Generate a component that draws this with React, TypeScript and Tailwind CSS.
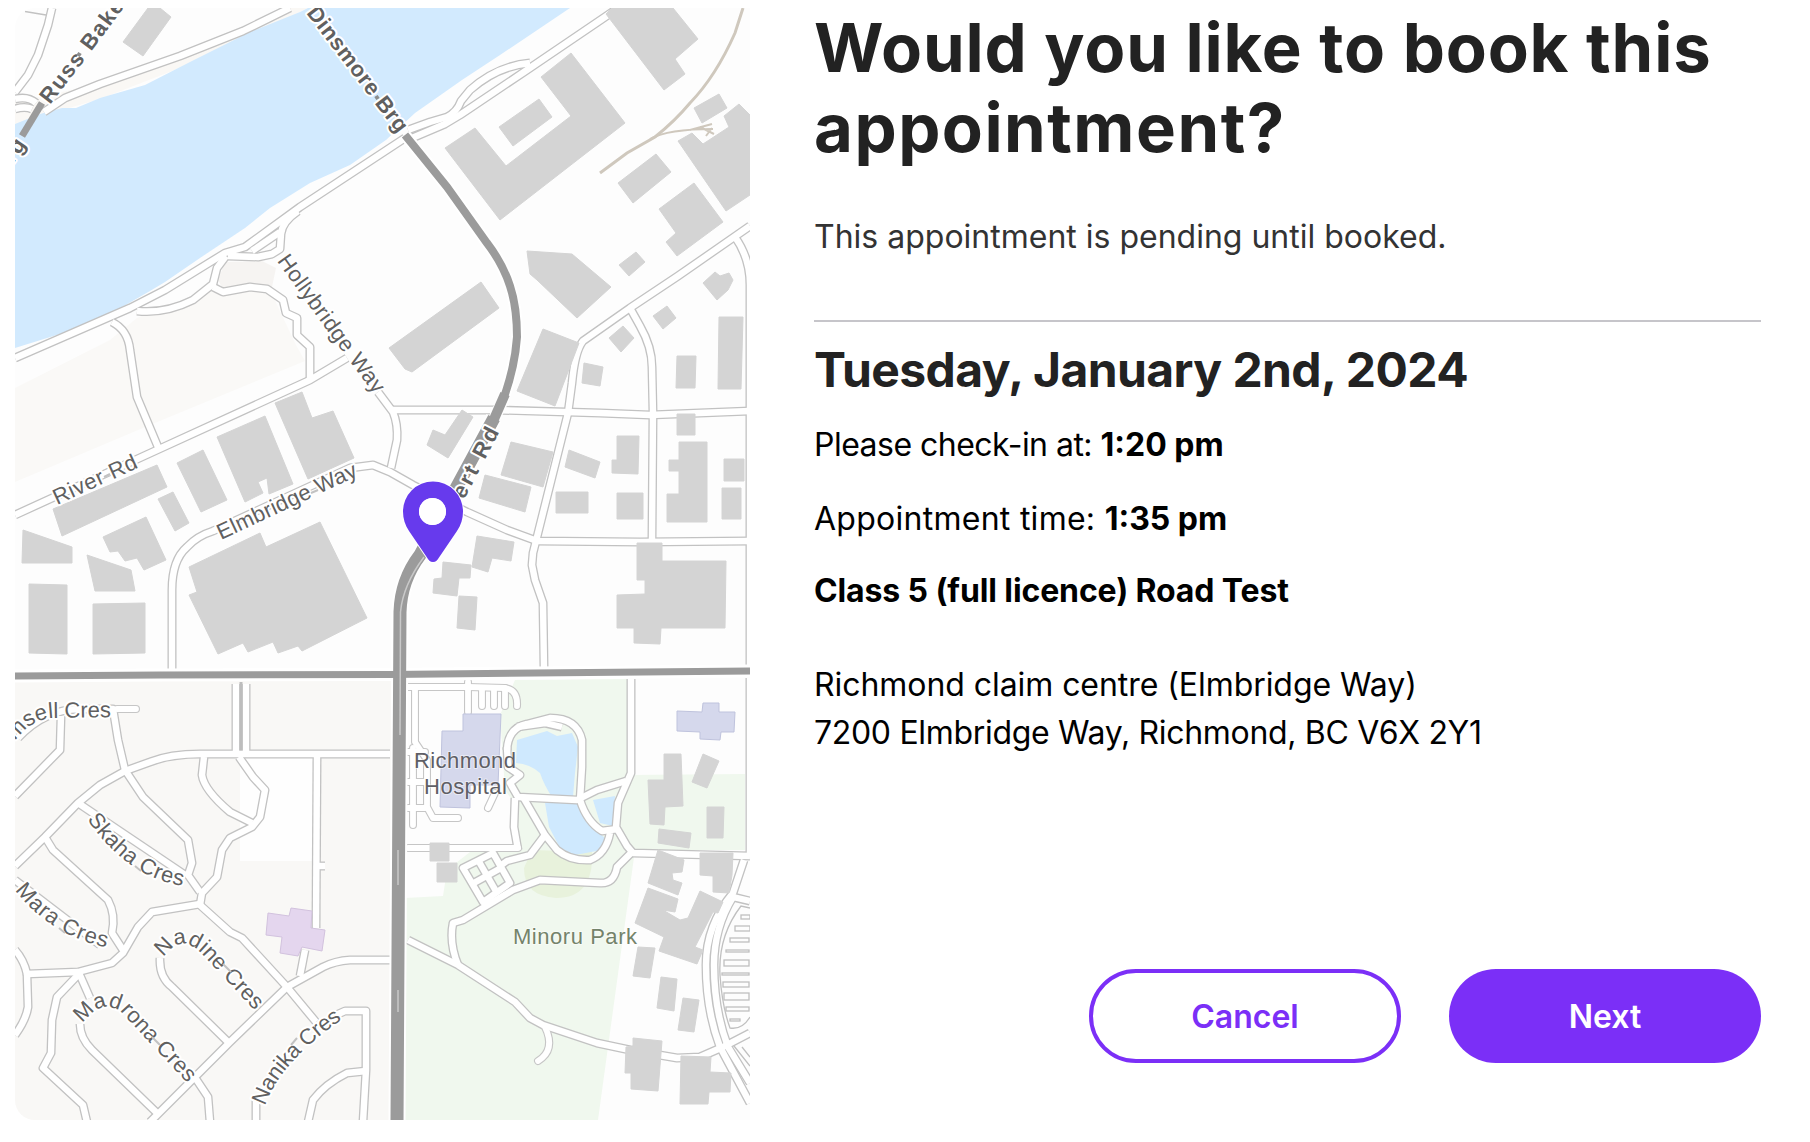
import React from "react";

const BUILDINGS: string[] = [
  "148,8 160,8 171,17 143,56 123,42",
  "606,14 612,8 673,8 698,39 675,59 685,74 664,90",
  "445,148 475,128 506,166 571,116 541,77 571,53 625,123 500,220",
  "499,127 539,99 552,117 513,146",
  "694,108 719,94 727,108 702,123",
  "678,141 692,133 703,144 729,127 724,116 739,104 750,115 750,195 726,211",
  "618,183 656,154 671,172 633,203",
  "659,209 694,183 723,222 677,256 666,242 676,233",
  "527,251 572,254 611,287 577,318 537,280 530,274",
  "619,265 636,252 645,262 629,276",
  "703,283 715,272 720,276 729,273 733,280 728,290 717,300",
  "389,348 481,282 499,308 412,372 405,369",
  "543,329 579,343 555,406 517,391",
  "653,316 667,306 676,318 663,329",
  "609,338 623,326 634,338 621,352",
  "584,363 603,367 600,386 582,383",
  "719,317 743,317 741,389 718,389",
  "677,356 696,356 695,388 676,388",
  "462,410 473,417 448,458 427,445 433,430 445,435",
  "511,442 553,452 543,487 501,475",
  "485,475 531,487 525,512 479,498",
  "569,450 600,462 595,478 565,467",
  "617,436 639,436 638,474 612,473 612,460 617,460",
  "556,492 588,492 588,513 556,513",
  "617,493 643,493 643,519 617,519",
  "677,414 695,414 695,435 677,435",
  "679,442 707,442 707,522 667,522 667,494 679,494 679,471 669,471 669,460 679,460",
  "724,459 744,459 744,481 724,481",
  "722,488 741,488 741,519 722,519",
  "477,536 514,542 511,561 492,558 488,572 472,567",
  "443,562 471,565 470,578 459,578 457,596 433,593 434,579 442,578",
  "459,596 477,597 475,630 457,628",
  "637,543 662,543 662,561 726,561 725,628 661,628 660,644 634,643 634,628 617,628 617,595 645,594 645,580 637,580",
  "53,509 157,465 167,487 62,536",
  "177,463 203,450 227,500 201,512",
  "158,499 173,492 189,523 175,531",
  "217,437 265,416 293,484 269,494 267,478 258,482 263,493 245,502",
  "275,403 302,392 312,418 333,411 354,458 308,479",
  "23,530 72,547 72,563 22,563",
  "103,537 146,517 166,560 144,570 137,558 125,561 118,551 110,552",
  "87,555 131,570 135,591 95,591",
  "29,584 67,585 67,654 29,653",
  "93,604 145,603 145,653 93,654",
  "189,567 260,533 266,547 320,522 367,618 302,651 298,646 278,653 273,642 248,652 243,643 218,654 189,595 197,592",
  "664,754 681,754 683,806 665,807 664,825 650,824 648,780 664,780",
  "703,754 719,761 707,788 692,782",
  "707,807 724,807 723,838 707,838",
  "659,829 691,833 689,848 658,843",
  "430,843 449,843 449,861 430,861",
  "437,863 457,863 457,882 437,882",
  "658,850 684,860 682,872 672,873 673,880 682,883 678,895 648,883",
  "648,888 678,899 675,912 663,910 680,920 688,918 700,891 723,902 718,913 713,912 695,947 703,950 697,964 659,951 664,937 635,923",
  "700,853 733,853 732,875 729,893 713,892 713,876 700,875",
  "638,947 655,948 650,978 633,976",
  "661,977 677,979 674,1011 657,1008",
  "683,998 699,1000 694,1032 678,1030",
  "633,1038 662,1041 658,1091 631,1089 631,1073 625,1073 626,1047 633,1046",
  "681,1056 711,1057 710,1072 731,1073 730,1092 709,1092 708,1104 680,1104",
];

const STREETS: string[] = [
  "M290,8 L243,31 L180,56 L100,84 L65,98 L44,112",
  "M52,8 L48,25 L38,55 L28,75 L15,92",
  "M15,99 Q28,96 36,103",
  "M15,109 Q25,106 32,109",
  "M618,8 L605,17 L524,72 L460,115 L445,124 L405,141",
  "M408,130 L430,122 L447,117 Q457,112 461,101 L470,90 Q497,66 530,63",
  "M405,138 L300,207 L245,247 L225,253 L165,290 L130,308 L15,358",
  "M298,211 Q282,222 281,234 L280,249 L272,254 L258,257 L228,256",
  "M280,232 L252,251",
  "M137,311 Q165,314 193,300 L213,284 L217,268 L226,256",
  "M213,287 L223,292 L250,287 L267,289 L283,300 L286,313 L297,318 L297,335 L310,347 L310,380",
  "M112,322 Q128,330 130,350 L137,397 L158,447",
  "M15,515 L157,450 L310,380 L347,358",
  "M378,392 L393,412 Q398,424 397,440 L391,468",
  "M393,410 L495,410 L600,413 L650,415 L750,411",
  "M172,670 L172,590 Q172,560 187,547 Q197,536 213,531 L350,468 L373,465 L390,472 L413,485 L467,512 L507,530 L537,541 L640,542 L750,541",
  "M750,226 L678,276 L630,308 L583,341 Q575,351 572,383 L568,413 L543,513 L533,553 L532,565 L535,580 L543,603 L544,668",
  "M630,308 L640,326 Q652,347 652,367 L653,413 L652,540",
  "M735,237 Q750,258 750,285 L750,668",
  "M750,678 L750,855",
  "M18,738 Q45,709 80,709 L113,709 L118,740 L125,770 L143,797 L188,840 L192,863 L188,875 L200,892",
  "M61,716 L60,750 L15,796",
  "M390,754 L200,754 Q170,754 150,762 L125,771 L100,785 L78,803 L45,837 L15,866",
  "M78,803 L185,875",
  "M45,837 L53,850 L108,900 Q116,915 112,933 L123,950",
  "M15,880 L100,945",
  "M204,757 L202,775 Q204,790 230,812 L252,823",
  "M239,757 L253,777 L265,790 L260,817 L252,827 L230,838 L222,850 L217,877 L202,893 L200,905",
  "M236,684 L236,754",
  "M246,684 L246,754",
  "M317,757 L316,928",
  "M316,866 L325,866",
  "M305,950 L300,976",
  "M390,960 L350,960 Q335,961 323,967 L287,987 L230,1042 L192,1080 L150,1122",
  "M200,905 L230,932 L242,938 L287,987 L316,1022",
  "M200,904 L152,912 L138,927 L123,953 L112,963 L78,972 L27,974 Q24,960 15,950",
  "M27,974 L28,1007 Q26,1020 15,1035",
  "M78,975 L57,997 L52,1020 L51,1053 L43,1068 L83,1105 L87,1122",
  "M79,973 L90,998",
  "M160,958 Q159,977 172,987 L228,1042",
  "M80,1024 Q80,1038 92,1050 L157,1113",
  "M196,1079 L208,1097 L210,1122",
  "M256,1122 L256,1100",
  "M336,1015 L345,1011 L366,1011 L366,1070 L363,1122",
  "M366,1071 L347,1073 Q325,1084 313,1100 L308,1122",
  "M631,679 L631,773 L618,803 L616,827 L627,846 L633,853 L750,856",
  "M507,747 L508,767 L520,775 L510,783 L518,797 L577,800 L597,790 L626,781",
  "M507,750 Q508,728 527,724 L550,718 Q577,718 582,740 L582,767 L580,800 Q587,822 602,831 L618,829",
  "M517,727 L545,723 L562,727",
  "M523,797 L545,835 L557,850 Q570,861 590,860 Q606,854 610,833",
  "M515,798 L514,827 L518,850",
  "M545,835 L530,855 L507,861 L500,866",
  "M631,853 L617,867 Q614,884 600,883 L540,880 L513,890 L463,920 L453,923 Q449,943 458,965",
  "M408,940 L458,965 L515,1002 L530,1018 L543,1025 L597,1043 L630,1050 L677,1058 L700,1057 L723,1047 L750,1033",
  "M744,860 L733,893 Q706,925 706,965 Q706,1010 720,1047 L750,1103",
  "M750,901 L733,897 Q714,928 714,965 Q714,1010 728,1047 L750,1083",
  "M463,868 L493,853 L510,883 L483,902 Z",
  "M472,884 L501,868",
  "M478,860 L497,893",
];

const LANES: string[] = [
  "M117,709 L136,709",
  "M545,1027 Q556,1050 538,1061",
  "M408,687 L468,687 L505,688 Q518,690 517,706",
  "M415,688 L415,742 L427,760 L427,807 L433,818 L458,818",
  "M413,748 L413,825",
  "M468,682 L468,712",
  "M482,688 L482,706",
  "M494,688 L494,706",
  "M505,688 L505,706",
  "M408,752 L425,752",
  "M408,782 L425,782",
  "M408,808 L425,808",
  "M408,848 L518,848",
  "M495,793 L488,808",
];

const PARKING: [number, number, number, number][] = [
  [741, 915, 9, 4],
  [735, 926, 15, 5],
  [730, 938, 19, 4],
  [726, 950, 23, 2],
  [724, 960, 25, 6],
  [722, 973, 27, 2],
  [723, 982, 26, 5],
  [724, 993, 25, 7],
  [726, 1007, 23, 4],
  [730, 1019, 10, 2],
];

type Label = {
  id: string;
  text: string;
  d: string;
  length: number;
  bold?: boolean;
};

const LABELS: Label[] = [
  { id: "russ", text: "Russ Baker", d: "M50,105 L90,53 L140,-14", length: 134, bold: true },
  { id: "brg", text: "Brg", d: "M3,179 L37,129", length: 42, bold: true },
  { id: "dins", text: "Dinsmore Brg", d: "M306,13 L406,144.500", length: 152, bold: true },
  { id: "gilbert", text: "ert Rd", d: "M464,500 L502,427", length: 77, bold: true },
  { id: "holly", text: "Hollybridge Way", d: "M277,261 Q320,322 386,410", length: 166 },
  { id: "river", text: "River Rd", d: "M57,505 L142,466", length: 90 },
  { id: "elm", text: "Elmbridge Way", d: "M221,540 L364,473", length: 152 },
  { id: "munsell", text: "msell Cres", d: "M15,741 Q32,718 55,718 L120,717", length: 104 },
  { id: "skaha", text: "Skaha Cres", d: "M87,819 Q130,882 192,887", length: 120 },
  { id: "mara", text: "Mara Cres", d: "M15,890 Q52,938 114,949", length: 110 },
  { id: "nadine", text: "Nadine Cres", d: "M163,957 L173,947 Q186,939 200,952 L260,1016", length: 124 },
  { id: "madrona", text: "Madrona Cres", d: "M82,1023 L94,1011 Q108,1002 122,1013 L192,1088", length: 143 },
  { id: "nanika", text: "Nanika Cres", d: "M265,1106 Q280,1062 344,1018", length: 118 },
];

function Pin() {
  return (
    <path
      d="M433,562 C430,562 428.500,560 427,557.500 L409,531 C405,525 403,519 403,511.500 A30,30 0 0 1 463,511.500 C463,519 461,525 457,531 L439,557.500 C437.500,560 436,562 433,562 Z M432.500,498 a13.500,13.500 0 1 0 0.010,0 Z"
      fill="#673aed"
      stroke="#ffffff"
      strokeWidth="2"
      paintOrder="stroke"
      fillRule="evenodd"
    />
  );
}

function MapView() {
  const main =
    "M405,135 L447,187 L487,243 Q503,264 510,286 Q517,307 517,337 Q515,367 503,400 L495,417";
  const wide = "M494,418 L420,555 Q401,580 400,612 L397,1122";
  return (
    <svg
      viewBox="15 8 735 1112"
      className="h-[1112px] w-[735px] shrink-0 rounded-l-[20px] bg-[#fdfdfd]"
      fontFamily="'Liberation Sans', sans-serif"
    >
      <polygon
        points="15,388 110,340 137,318 215,287 270,290 296,345 305,361 150,425 15,482"
        fill="#faf9f7"
      />
      <polygon points="225,262 262,261 276,268 272,287 223,289 218,280" fill="#f6f4f2" />
      <polygon points="15,102 100,84 243,31 290,8 308,8 190,64 100,99 62,110 15,124" fill="#faf8f5" />
      <polygon
        points="15,124 40,114 62,108 76,108 100,98 145,85 190,62 250,32 300,12 308,8 570,8 500,55 462,80 415,113 386,140 350,165 310,183 270,208 245,228 200,258 165,282 150,291 110,314 60,334 15,348"
        fill="#d2eafe"
      />
      <rect x="15" y="679" width="378" height="441" fill="#f9f8f6" />
      <rect x="240" y="758" width="73" height="103" fill="#fefefe" />
      <path
        d="M515,680 L627,679 L627,775 L745,774 L745,850 L635,850 L598,1120 L405,1120 L405,898 L443,896 L447,870 L470,852 L518,850 L512,800 L505,790 L500,715 Z"
        fill="#f0f8ee"
      />
      <path d="M532,850 L592,852 Q594,898 556,898 Q524,896 524,868 Z" fill="#e8f2dc" />
      <path
        d="M517,740 L547,731 L557,736 L572,733 L578,747 L575,773 L573,797 L552,797 Q544,785 540,773 Q530,764 516,763 Z M545,803 L578,803 L587,823 L605,838 L602,850 L575,855 L560,848 L549,827 Z M593,800 L615,796 L613,826 L600,823 Z"
        fill="#cfe9fe"
      />

      <g fill="none" stroke="#c2c2c2" strokeWidth="9" strokeLinejoin="round">
        {STREETS.map((d) => (
          <path key={d} d={d} />
        ))}
      </g>
      <g fill="none" stroke="#c6c6c6" strokeWidth="8" strokeLinejoin="round" strokeLinecap="round">
        {LANES.map((d) => (
          <path key={d} d={d} />
        ))}
      </g>
      <g fill="none" stroke="#ffffff" strokeWidth="6.4" strokeLinejoin="round">
        {STREETS.map((d) => (
          <path key={d} d={d} />
        ))}
      </g>
      <g fill="none" stroke="#ffffff" strokeWidth="5.8" strokeLinejoin="round" strokeLinecap="round">
        {LANES.map((d) => (
          <path key={d} d={d} />
        ))}
      </g>
      <path d="M241,682 L241,750" stroke="#bdbdbd" strokeWidth="3" />
      <path d="M25,11.500 L46,15" stroke="#c2c2c2" strokeWidth="1.300" />

      <g fill="#d4d4d4" stroke="#d4d4d4" strokeWidth="1" strokeLinejoin="round">
        {BUILDINGS.map((points) => (
          <polygon key={points} points={points} />
        ))}
      </g>
      <g fill="#d5d8ec" stroke="#bfc3dd" strokeWidth="1">
        <polygon points="463,714 501,714 498,785 470,785 470,808 440,807 442,731 463,731" />
        <polygon points="677,711 702,712 703,703 719,703 719,712 735,712 734,732 721,732 720,740 700,739 700,732 677,731" />
      </g>
      <polygon
        points="268,913 289,916 291,908 312,911 311,928 325,930 322,951 302,947 298,956 280,953 282,937 266,935"
        fill="#e4d6ee"
        stroke="#d2c2de"
      />
      <g fill="#fdfdfd" stroke="#c0c0c0" strokeWidth="1.300">
        {PARKING.map(([x, y, w, h]) => (
          <rect key={y} x={x} y={y} width={w} height={h} />
        ))}
        <path fill="none" d="M750,908 L741,906 Q718,936 720,975 Q722,1006 730,1028 Q742,1030 750,1017" />
        <path fill="none" d="M734,1046 L750,1066 M742,1047 L750,1057" />
      </g>

      <g fill="none" stroke="#cfc8bd" strokeWidth="3">
        <path d="M743,8 L735,33 Q716,76 690,103 Q675,121 655,137 L627,153 L600,173" />
        <path d="M650,139 Q668,129 713,129 M690,130 L712,124 M700,127 L714,134 M706,136 L712,128" strokeWidth="2" />
      </g>

      <g fill="none" stroke="#ffffff">
        <path d={main} strokeWidth="12" />
        <path d={wide} strokeWidth="17" />
        <path d="M15,676 L160,675 L390,674.500 L750,671" strokeWidth="13" />
      </g>
      <g fill="none" stroke="#9b9b9b">
        <path d="M42,103 L22,136" strokeWidth="7" />
        <path d={main} strokeWidth="8" />
        <path d="M505,394 L491,426" strokeWidth="10" />
        <path d={wide} strokeWidth="13" />
        <path d="M15,676 L160,675 L390,674.500 L750,671" strokeWidth="7" />
      </g>
      <path
        d="M424,557 Q403,585 400.500,612 L400,735 M398,850 L398,885 M398,990 L398,1012"
        fill="none"
        stroke="#c9c9c9"
        strokeWidth="1.500"
      />

      <g fill="#606060" stroke="#ffffff" strokeWidth="4" strokeLinejoin="round" paintOrder="stroke">
        {LABELS.map((l) => (
          <React.Fragment key={l.id}>
            <path id={l.id} d={l.d} fill="none" stroke="none" />
            <text fontSize="22" fontWeight={l.bold ? 700 : 400}>
              <textPath href={`#${l.id}`} textLength={l.length}>
                {l.text}
              </textPath>
            </text>
          </React.Fragment>
        ))}
      </g>
      <path
        d="M104,477 L110,474 M311,493 L318,490 M135,866 L141,871 M59,928 L65,933 M223,964 L231,972 M152,1037 L160,1045 M291,1045 L297,1038"
        stroke="#c2c2c2"
        strokeWidth="2"
      />
      <path d="M78,56 L80,53 M376,96 L378,99" stroke="#8d8d8d" strokeWidth="4" />

      <g fontSize="22" strokeWidth="2" strokeLinejoin="round" paintOrder="stroke">
        <text x="414" y="767.500" textLength="102" fill="#5f5f66" stroke="#ffffff80">
          Richmond
        </text>
        <text x="424" y="793.500" textLength="83" fill="#5f5f66" stroke="#ffffff80">
          Hospital
        </text>
        <text x="513" y="943.500" textLength="124" fill="#74836a" stroke="#ffffff80">
          Minoru Park
        </text>
      </g>
      <Pin />
      <circle cx="432.500" cy="511.500" r="13.500" fill="#ffffff" />
    </svg>
  );
}

export default function App() {
  return (
    <main className="flex h-[1142px] w-[1810px] overflow-hidden bg-white pt-2 pl-[15px] font-['Inter',sans-serif] text-[32px] leading-[48px] text-black">
      <MapView />
      <section className="ml-16 flex w-[947px] flex-col whitespace-nowrap">
        <h1 className="text-[67px] leading-[80px] font-bold tracking-[0.85px] text-[#222222]">
          Would you like to book this
          <br />
          <span className="tracking-[1.5px]">appointment?</span>
        </h1>
        <p className="mt-[45px] text-[#333333]">This appointment is pending until booked.</p>
        <hr className="mt-[59px] border-t-2 border-[#c6c5ca]" />
        <h2 className="mt-4 text-[48px] leading-[64px] font-bold tracking-[-0.58px] text-[#222222]">
          Tuesday, January 2nd, 2024
        </h2>
        <p className="mt-[19px]">
          <span className="tracking-[-0.52px]">Please check-in at: </span>
          <b className="font-bold">1:20 pm</b>
        </p>
        <p className="mt-[26px]">
          <span className="tracking-[0.27px]">Appointment time: </span>
          <b className="font-bold">1:35 pm</b>
        </p>
        <p className="mt-6 font-bold tracking-[-0.12px]">Class 5 (full licence) Road Test</p>
        <address className="mt-[46px] not-italic">
          <span className="tracking-[-0.06px]">Richmond claim centre (Elmbridge Way)</span>
          <br />
          <span className="tracking-[-0.32px]">7200 Elmbridge Way, Richmond, BC V6X 2Y1</span>
        </address>
        <div className="mt-[212px] flex justify-end gap-12 font-semibold">
          <button className="h-[94px] w-[312px] rounded-full border-4 border-[#7b2ff7] pt-0.5 text-[#7b2ff7]">
            Cancel
          </button>
          <button className="h-[94px] w-[312px] rounded-full bg-[#7b2ff7] pt-0.5 text-white">
            Next
          </button>
        </div>
      </section>
    </main>
  );
}
